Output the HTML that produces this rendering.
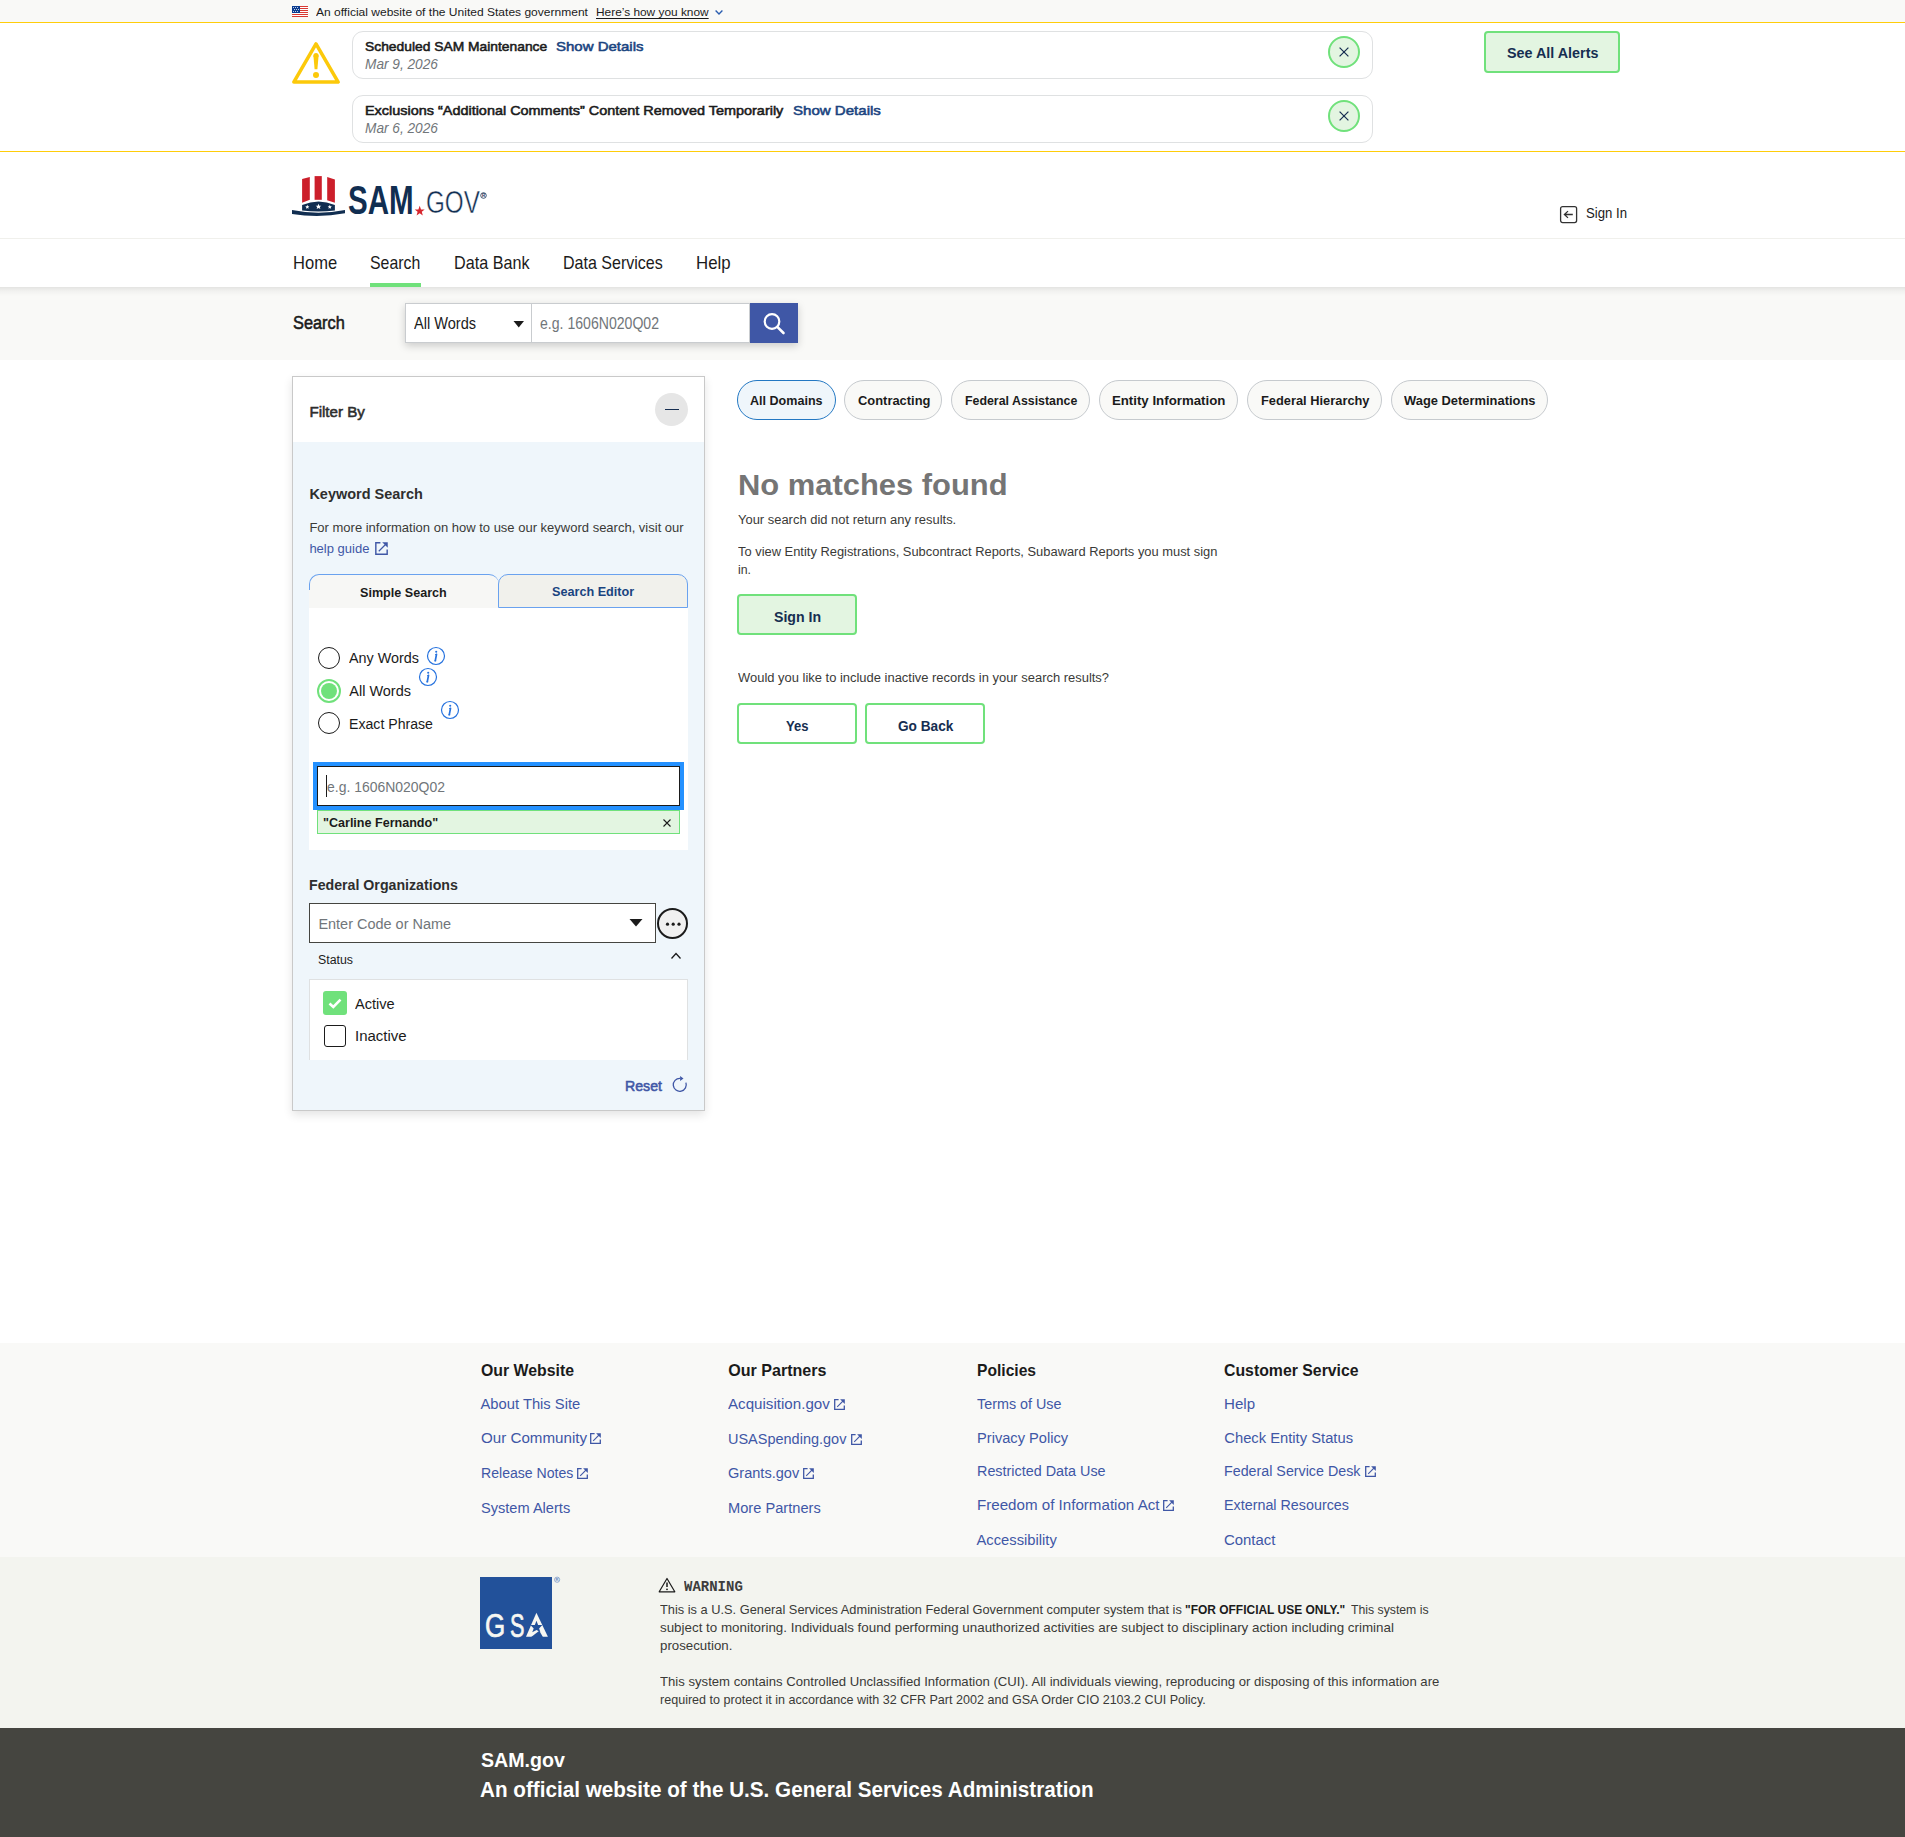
<!DOCTYPE html><html><head><meta charset='utf-8'><title>SAM.gov Search</title><style>
*{box-sizing:border-box;margin:0;padding:0}
html,body{width:1905px;height:1837px;overflow:hidden;background:#fff;font-family:"Liberation Sans",sans-serif;}
.t{position:absolute;white-space:nowrap;transform-origin:0 0;}
.r{position:absolute;}
svg{position:absolute;overflow:visible}
</style></head><body>
<div class="r" style="left:0px;top:0px;width:1905px;height:22px;background:#f9f9f7"></div>
<div class="r" style="left:0px;top:22px;width:1905px;height:1px;background:#ffcd0a"></div>
<div class="r" style="left:0px;top:151px;width:1905px;height:1px;background:#ffcd0a"></div>
<div class="r" style="left:0px;top:238px;width:1905px;height:1px;background:#f0f0ec"></div>
<div class="r" style="left:0px;top:287px;width:1905px;height:73px;background:#f9f9f7"></div>
<div class="r" style="left:0px;top:287px;width:1905px;height:9px;background:linear-gradient(rgba(0,0,0,0.085),rgba(0,0,0,0.03) 45%,rgba(0,0,0,0))"></div>
<div class="r" style="left:0px;top:1343px;width:1905px;height:214px;background:#f9f9f7"></div>
<div class="r" style="left:0px;top:1557px;width:1905px;height:171px;background:#f3f4ef"></div>
<div class="r" style="left:0px;top:1728px;width:1905px;height:109px;background:#454540"></div>
<svg style="left:292px;top:6px" width="16" height="11" viewBox="0 0 16 11">
<rect width="16" height="11" fill="#fff"/>
<g fill="#d83933"><rect y="0" width="16" height="1"/><rect y="2" width="16" height="1"/><rect y="4" width="16" height="1"/><rect y="6" width="16" height="1"/><rect y="8" width="16" height="1"/><rect y="10" width="16" height="1"/></g>
<rect width="8" height="7" fill="#0b3d91"/>
<g fill="#fff"><circle cx="1.5" cy="1.5" r=".5"/><circle cx="3.5" cy="1.5" r=".5"/><circle cx="5.5" cy="1.5" r=".5"/><circle cx="2.5" cy="3.5" r=".5"/><circle cx="4.5" cy="3.5" r=".5"/><circle cx="6.5" cy="3.5" r=".5"/><circle cx="1.5" cy="5.5" r=".5"/><circle cx="3.5" cy="5.5" r=".5"/><circle cx="5.5" cy="5.5" r=".5"/></g>
</svg><span class="t" style="left:315.70px;top:7.01px;font-size:11.80px;line-height:11.80px;color:#1b1b1b;transform:scaleX(1.0198);">An official website of the United States government</span>
<span class="t" style="left:596.00px;top:7.01px;font-size:11.80px;line-height:11.80px;color:#1b1b1b;transform:scaleX(1.0065);text-decoration:underline;text-underline-offset:1.5px;">Here’s how you know</span>
<svg style="left:714px;top:8px" width="10" height="8" viewBox="0 0 10 8"><path d="M1.6 2.6 L5 5.9 L8.4 2.6" fill="none" stroke="#2a5db0" stroke-width="1.4"/></svg><svg style="left:292px;top:42px" width="48" height="42" viewBox="0 0 48 42">
<path d="M24 1.9 L46.2 40.1 L1.8 40.1 Z" fill="none" stroke="#fcc90a" stroke-width="3.5" stroke-linejoin="round"/>
<circle cx="24" cy="13.6" r="2.6" fill="#fcc90a"/>
<path d="M21.4 13.6 L26.6 13.6 L25.4 27.2 L22.6 27.2 Z" fill="#fcc90a"/>
<circle cx="24" cy="33" r="3" fill="#fcc90a"/>
</svg><div class="r" style="left:352px;top:31px;width:1021px;height:48px;border:1px solid #dfe1e2;border-radius:11px;background:#fff"></div>
<div class="r" style="left:1328px;top:36px;width:32px;height:32px;border:2px solid #70e17b;border-radius:50%;background:#e3f5e1"></div>
<svg style="left:1338px;top:46px" width="12" height="12" viewBox="0 0 12 12"><path d="M1.6 1.6 L10.4 10.4 M10.4 1.6 L1.6 10.4" stroke="#162e51" stroke-width="1.25"/></svg><div class="r" style="left:352px;top:95px;width:1021px;height:48px;border:1px solid #dfe1e2;border-radius:11px;background:#fff"></div>
<div class="r" style="left:1328px;top:100px;width:32px;height:32px;border:2px solid #70e17b;border-radius:50%;background:#e3f5e1"></div>
<svg style="left:1338px;top:110px" width="12" height="12" viewBox="0 0 12 12"><path d="M1.6 1.6 L10.4 10.4 M10.4 1.6 L1.6 10.4" stroke="#162e51" stroke-width="1.25"/></svg><span class="t" style="left:365.30px;top:39.85px;font-size:13.41px;line-height:13.41px;color:#1b1b1b;transform:scaleX(1.0314);-webkit-text-stroke:0.55px #1b1b1b;">Scheduled SAM Maintenance</span>
<span class="t" style="left:556.30px;top:39.85px;font-size:13.41px;line-height:13.41px;color:#1a4480;transform:scaleX(1.1184);-webkit-text-stroke:0.55px #1a4480;">Show Details</span>
<span class="t" style="left:365.30px;top:57.61px;font-size:13.81px;line-height:13.81px;color:#71767a;font-style:italic;transform:scaleX(0.9899);">Mar 9, 2026</span>
<span class="t" style="left:365.30px;top:103.85px;font-size:13.41px;line-height:13.41px;color:#1b1b1b;transform:scaleX(1.0762);-webkit-text-stroke:0.55px #1b1b1b;">Exclusions “Additional Comments” Content Removed Temporarily</span>
<span class="t" style="left:792.50px;top:103.85px;font-size:13.41px;line-height:13.41px;color:#1a4480;transform:scaleX(1.1235);-webkit-text-stroke:0.55px #1a4480;">Show Details</span>
<span class="t" style="left:365.30px;top:121.61px;font-size:13.81px;line-height:13.81px;color:#71767a;font-style:italic;transform:scaleX(0.9899);">Mar 6, 2026</span>
<div class="r" style="left:1484px;top:31px;width:136px;height:42px;border:2px solid #70e17b;border-radius:4px;background:#e3f5e1"></div>
<span class="t" style="left:1506.60px;top:46.42px;font-size:14.75px;line-height:14.75px;color:#162e51;font-weight:bold;transform:scaleX(0.9721);">See All Alerts</span>
<svg style="left:290px;top:172px" width="60" height="48" viewBox="0 0 60 48">
<g fill="#cc1f2b"><path d="M12.1 7.1 L19.8 4.9 L19.8 27.7 L12.1 30.7 Z"/><path d="M24.6 4.1 L31.8 4.1 L31.8 27.8 L24.6 27.8 Z"/><path d="M37.2 5 L44.9 7.4 L44.9 30.7 L37.2 28.3 Z"/></g>
<path d="M12.1 33.1 Q28.5 25.7 44.9 33.1 L44.9 38.6 Q28.5 40.4 12.1 38.6 Z" fill="#112e51"/>
<path d="M2 38.1 Q28.5 43.2 55 38.1 L55 41.3 Q28.5 46.2 2 41.9 Z" fill="#112e51"/>
<g fill="#fff">
<path d="M17.3 32.8 L17.9 34.2 L19.4 34.3 L18.3 35.2 L18.6 36.7 L17.3 35.9 L16 36.7 L16.3 35.2 L15.2 34.3 L16.7 34.2 Z"/>
<path d="M28.5 31.8 L29.3 33.7 L31.3 33.8 L29.8 35 L30.3 37 L28.5 35.9 L26.7 37 L27.2 35 L25.7 33.8 L27.7 33.7 Z"/>
<path d="M39.8 32.8 L40.4 34.2 L41.9 34.3 L40.8 35.2 L41.1 36.7 L39.8 35.9 L38.5 36.7 L38.8 35.2 L37.7 34.3 L39.2 34.2 Z"/>
</g></svg><span class="t" style="left:347.50px;top:179.74px;font-size:40.00px;line-height:40.00px;color:#112e51;font-weight:bold;transform:scaleX(0.7387);">SAM</span>
<svg style="left:414px;top:205px" width="12" height="11" viewBox="0 0 12 11"><path d="M5.7 0.8 L7 4.4 L10.7 4.5 L7.8 6.8 L8.8 10.4 L5.7 8.3 L2.6 10.4 L3.6 6.8 L0.7 4.5 L4.4 4.4 Z" fill="#d7262e"/></svg><span class="t" style="left:425.80px;top:187.05px;font-size:31.60px;line-height:31.60px;color:#112e51;transform:scaleX(0.7680);-webkit-text-stroke:0.5px #fff;">GOV</span>
<svg style="left:480px;top:192px" width="8" height="8" viewBox="0 0 8 8"><circle cx="3.5" cy="3.5" r="2.8" fill="none" stroke="#112e51" stroke-width="0.8"/><text x="3.5" y="5.1" font-size="4.5" font-family="Liberation Sans" font-weight="bold" text-anchor="middle" fill="#112e51">R</text></svg><svg style="left:1559px;top:205px" width="20" height="20" viewBox="0 0 20 20"><rect x="1.6" y="1.6" width="16" height="16" rx="2" fill="none" stroke="#333" stroke-width="1.3"/><path d="M13.8 9.5 L5.4 9.5 M9 6.1 L5.4 9.5 L9 12.9" fill="none" stroke="#333" stroke-width="1.3"/></svg><span class="t" style="left:1586.10px;top:206.48px;font-size:14.08px;line-height:14.08px;color:#1b1b1b;transform:scaleX(0.9349);">Sign In</span>
<span class="t" style="left:292.50px;top:254.62px;font-size:17.70px;line-height:17.70px;color:#1b1b1b;transform:scaleX(0.9354);">Home</span>
<span class="t" style="left:370.00px;top:254.62px;font-size:17.70px;line-height:17.70px;color:#1b1b1b;transform:scaleX(0.8966);">Search</span>
<span class="t" style="left:453.80px;top:254.62px;font-size:17.70px;line-height:17.70px;color:#1b1b1b;transform:scaleX(0.9137);">Data Bank</span>
<span class="t" style="left:562.90px;top:254.62px;font-size:17.70px;line-height:17.70px;color:#1b1b1b;transform:scaleX(0.9059);">Data Services</span>
<span class="t" style="left:695.50px;top:254.62px;font-size:17.70px;line-height:17.70px;color:#1b1b1b;transform:scaleX(0.9513);">Help</span>
<div class="r" style="left:370px;top:283px;width:51px;height:4px;background:#70e17b"></div>
<span class="t" style="left:292.50px;top:314.70px;font-size:17.83px;line-height:17.83px;color:#1b1b1b;transform:scaleX(0.9163);-webkit-text-stroke:0.55px #1b1b1b;">Search</span>
<div class="r" style="left:405px;top:303px;width:393px;height:40px;box-shadow:0 3px 8px rgba(0,0,0,0.18);background:#fff"></div>
<div class="r" style="left:405px;top:303px;width:127px;height:40px;border:1px solid #c9cccf;background:#fff"></div>
<span class="t" style="left:414.00px;top:316.29px;font-size:15.96px;line-height:15.96px;color:#1b1b1b;transform:scaleX(0.9122);">All Words</span>
<svg style="left:513px;top:320px" width="12" height="8" viewBox="0 0 12 8"><path d="M0.5 1 L11 1 L5.75 7.5 Z" fill="#1b1b1b"/></svg><div class="r" style="left:532px;top:303px;width:218px;height:40px;border:1px solid #c9cccf;border-left:none;background:#fff"></div>
<span class="t" style="left:540.20px;top:316.29px;font-size:15.96px;line-height:15.96px;color:#71767a;transform:scaleX(0.8826);">e.g. 1606N020Q02</span>
<div class="r" style="left:750px;top:303px;width:48px;height:40px;background:#3f57a6"></div>
<svg style="left:760px;top:310px" width="28" height="28" viewBox="0 0 28 28"><circle cx="12" cy="11.5" r="7.3" fill="none" stroke="#fff" stroke-width="2.2"/><path d="M17.3 16.8 L23.5 23" stroke="#fff" stroke-width="2.6" stroke-linecap="round"/></svg><div class="r" style="left:292px;top:376px;width:413px;height:735px;border:1px solid #c9c9c9;background:#eff6fb;box-shadow:0 4px 9px rgba(0,0,0,0.11)"></div>
<div class="r" style="left:293px;top:377px;width:411px;height:65px;background:#fff"></div>
<span class="t" style="left:309.40px;top:404.07px;font-size:15.15px;line-height:15.15px;color:#2e2e2e;-webkit-text-stroke:0.55px #2e2e2e;">Filter By</span>
<div class="r" style="left:655px;top:393px;width:33px;height:33px;border-radius:50%;background:#e6e6e6"></div>
<div class="r" style="left:665px;top:409px;width:14px;height:1.3000000000000114px;background:#162e51"></div>
<span class="t" style="left:309.40px;top:486.54px;font-size:14.48px;line-height:14.48px;color:#2e2e2e;font-weight:bold;">Keyword Search</span>
<span class="t" style="left:309.40px;top:520.99px;font-size:13.01px;line-height:13.01px;color:#3a3a37;">For more information on how to use our keyword search, visit our</span>
<span class="t" style="left:309.40px;top:542.39px;font-size:13.01px;line-height:13.01px;color:#3f57a6;">help guide</span>
<svg style="left:375px;top:542px" width="13" height="13" viewBox="0 0 11 11"><path d="M4.6 0.7 L0.7 0.7 L0.7 10.3 L10.3 10.3 L10.3 6.4" fill="none" stroke="#3f57a6" stroke-width="1.2"/><path d="M3.2 7.8 L8.9 2.1" stroke="#3f57a6" stroke-width="1"/><path d="M6.1 0.2 L10.8 0.2 L10.8 4.9 Z" fill="#3f57a6"/></svg><div class="r" style="left:309px;top:574px;width:190px;height:36px;background:#f7f7f5;border:1px solid #6aa2ef;border-bottom:none;border-right:none;border-radius:10px 10px 0 0"></div>
<div class="r" style="left:498px;top:574px;width:190px;height:34px;background:#f1f1ec;border:1px solid #6aa2ef;border-radius:10px 10px 0 0"></div>
<div class="r" style="left:309px;top:590px;width:1px;height:18px;background:#f7f7f5"></div>
<span class="t" style="left:360.20px;top:586.15px;font-size:13.41px;line-height:13.41px;color:#1b1b1b;font-weight:bold;transform:scaleX(0.9385);">Simple Search</span>
<span class="t" style="left:552.00px;top:584.95px;font-size:13.41px;line-height:13.41px;color:#1a4480;font-weight:bold;transform:scaleX(0.9432);">Search Editor</span>
<div class="r" style="left:309px;top:608px;width:379px;height:242px;background:#fff"></div>
<div class="r" style="left:318px;top:647px;width:22px;height:22px;border-radius:50%;border:1.6px solid #1b1b1b;background:#fff"></div>
<span class="t" style="left:349.30px;top:651.34px;font-size:14.48px;line-height:14.48px;color:#1b1b1b;transform:scaleX(0.9926);">Any Words</span>
<svg style="left:426px;top:646px" width="20" height="20" viewBox="0 0 20 20"><circle cx="10" cy="10" r="8.5" fill="none" stroke="#2672de" stroke-width="1.2"/><circle cx="10.2" cy="5.7" r="1.05" fill="#2672de"/><path d="M10.5 8.4 L9.3 14.6" stroke="#2672de" stroke-width="1.7" stroke-linecap="round"/><path d="M9.1 8.7 L10.6 8.4 M8.4 14.8 L10.2 14.8" stroke="#2672de" stroke-width="1"/></svg><div class="r" style="left:317px;top:678.7px;width:24px;height:24.0px;border-radius:50%;border:2px solid #70e17b;background:#fff"></div>
<div class="r" style="left:321px;top:682.7px;width:16px;height:16.0px;border-radius:50%;background:#70e17b"></div>
<span class="t" style="left:349.30px;top:684.04px;font-size:14.48px;line-height:14.48px;color:#1b1b1b;">All Words</span>
<svg style="left:418px;top:667px" width="20" height="20" viewBox="0 0 20 20"><circle cx="10" cy="10" r="8.5" fill="none" stroke="#2672de" stroke-width="1.2"/><circle cx="10.2" cy="5.7" r="1.05" fill="#2672de"/><path d="M10.5 8.4 L9.3 14.6" stroke="#2672de" stroke-width="1.7" stroke-linecap="round"/><path d="M9.1 8.7 L10.6 8.4 M8.4 14.8 L10.2 14.8" stroke="#2672de" stroke-width="1"/></svg><div class="r" style="left:318px;top:712.2px;width:22px;height:22.0px;border-radius:50%;border:1.6px solid #1b1b1b;background:#fff"></div>
<span class="t" style="left:349.30px;top:716.54px;font-size:14.48px;line-height:14.48px;color:#1b1b1b;transform:scaleX(0.9758);">Exact Phrase</span>
<svg style="left:440px;top:700px" width="20" height="20" viewBox="0 0 20 20"><circle cx="10" cy="10" r="8.5" fill="none" stroke="#2672de" stroke-width="1.2"/><circle cx="10.2" cy="5.7" r="1.05" fill="#2672de"/><path d="M10.5 8.4 L9.3 14.6" stroke="#2672de" stroke-width="1.7" stroke-linecap="round"/><path d="M9.1 8.7 L10.6 8.4 M8.4 14.8 L10.2 14.8" stroke="#2672de" stroke-width="1"/></svg><div class="r" style="left:313px;top:762px;width:371px;height:48px;background:#2491ff"></div>
<div class="r" style="left:317px;top:766px;width:363px;height:40px;background:#fff;border:1px solid #1b1b1b"></div>
<div class="r" style="left:326px;top:775px;width:1px;height:22px;background:#1b1b1b"></div>
<span class="t" style="left:327.00px;top:780.04px;font-size:14.48px;line-height:14.48px;color:#71767a;transform:scaleX(0.9644);">e.g. 1606N020Q02</span>
<div class="r" style="left:317px;top:810px;width:363px;height:24px;background:#e3f5e1;border:1px solid #70e17b"></div>
<span class="t" style="left:323.40px;top:815.95px;font-size:13.41px;line-height:13.41px;color:#1b1b1b;font-weight:bold;transform:scaleX(0.9362);">&quot;Carline Fernando&quot;</span>
<svg style="left:662px;top:818px" width="10" height="10" viewBox="0 0 10 10"><path d="M1.5 1.5 L8.5 8.5 M8.5 1.5 L1.5 8.5" stroke="#1b1b1b" stroke-width="1.1"/></svg><span class="t" style="left:309.40px;top:878.91px;font-size:13.81px;line-height:13.81px;color:#2e2e2e;font-weight:bold;transform:scaleX(1.0271);">Federal Organizations</span>
<div class="r" style="left:309px;top:903px;width:347px;height:40px;background:#fff;border:1px solid #454540"></div>
<span class="t" style="left:318.40px;top:917.14px;font-size:14.48px;line-height:14.48px;color:#71767a;">Enter Code or Name</span>
<svg style="left:628px;top:917px" width="16" height="11" viewBox="0 0 16 11"><path d="M1.5 2 L14.5 2 L8 9.6 Z" fill="#1b1b1b"/></svg><div class="r" style="left:657px;top:908px;width:31px;height:31px;border-radius:50%;border:2px solid #1b1b1b;background:#f0f0f0"></div>
<svg style="left:663px;top:920px" width="20" height="8" viewBox="0 0 20 8"><circle cx="4.5" cy="4.2" r="1.6" fill="#1b1b1b"/><circle cx="10.2" cy="4.2" r="1.6" fill="#1b1b1b"/><circle cx="16" cy="4.2" r="1.6" fill="#1b1b1b"/></svg><span class="t" style="left:317.70px;top:953.84px;font-size:12.47px;line-height:12.47px;color:#1b1b1b;transform:scaleX(0.9901);">Status</span>
<svg style="left:669px;top:950px" width="14" height="10" viewBox="0 0 14 10"><path d="M2.5 8.5 L7 3.5 L11.5 8.5" fill="none" stroke="#1b1b1b" stroke-width="1.3"/></svg><div class="r" style="left:309px;top:979px;width:379px;height:81px;background:#fff;border:1px solid #dfe1e2;border-bottom:none"></div>
<div class="r" style="left:323px;top:991px;width:24px;height:24px;background:#70e17b;border-radius:3px"></div>
<svg style="left:323px;top:991px" width="24" height="24" viewBox="0 0 24 24"><path d="M6.5 12.5 L10.3 16 L17.5 8.6" fill="none" stroke="#fff" stroke-width="2.6"/></svg><span class="t" style="left:355.40px;top:997.34px;font-size:14.48px;line-height:14.48px;color:#1b1b1b;transform:scaleX(1.0086);">Active</span>
<div class="r" style="left:324px;top:1025px;width:22px;height:22px;background:#fff;border:1.5px solid #1b1b1b;border-radius:3px"></div>
<span class="t" style="left:355.40px;top:1028.94px;font-size:14.48px;line-height:14.48px;color:#1b1b1b;transform:scaleX(1.0364);">Inactive</span>
<span class="t" style="left:625.40px;top:1079.04px;font-size:14.48px;line-height:14.48px;color:#3f57a6;transform:scaleX(0.9790);-webkit-text-stroke:0.55px #3f57a6;">Reset</span>
<svg style="left:671px;top:1075px" width="17" height="17" viewBox="0 0 17 17"><path d="M9 3.3 A6.5 6.5 0 1 0 14.9 7.6" fill="none" stroke="#3f57a6" stroke-width="1.3"/><path d="M9.1 0.9 L12.5 3.5 L9.1 6.1 Z" fill="#3f57a6"/></svg><div class="r" style="left:737px;top:380px;width:99px;height:40px;border:1px solid #2378c3;border-radius:20px;background:#eff6fb"></div>
<span class="t" style="left:750.40px;top:394.16px;font-size:13.27px;line-height:13.27px;color:#1b1b1b;font-weight:bold;transform:scaleX(0.9463);">All Domains</span>
<div class="r" style="left:844px;top:380px;width:98px;height:40px;border:1px solid #c6cace;border-radius:20px;background:#f9f9f7"></div>
<span class="t" style="left:857.50px;top:394.16px;font-size:13.27px;line-height:13.27px;color:#1b1b1b;font-weight:bold;transform:scaleX(0.9736);">Contracting</span>
<div class="r" style="left:951px;top:380px;width:139px;height:40px;border:1px solid #c6cace;border-radius:20px;background:#f9f9f7"></div>
<span class="t" style="left:964.60px;top:394.16px;font-size:13.27px;line-height:13.27px;color:#1b1b1b;font-weight:bold;transform:scaleX(0.9326);">Federal Assistance</span>
<div class="r" style="left:1099px;top:380px;width:139px;height:40px;border:1px solid #c6cace;border-radius:20px;background:#f9f9f7"></div>
<span class="t" style="left:1111.90px;top:394.16px;font-size:13.27px;line-height:13.27px;color:#1b1b1b;font-weight:bold;">Entity Information</span>
<div class="r" style="left:1247px;top:380px;width:135px;height:40px;border:1px solid #c6cace;border-radius:20px;background:#f9f9f7"></div>
<span class="t" style="left:1260.70px;top:394.16px;font-size:13.27px;line-height:13.27px;color:#1b1b1b;font-weight:bold;transform:scaleX(0.9682);">Federal Hierarchy</span>
<div class="r" style="left:1391px;top:380px;width:157px;height:40px;border:1px solid #c6cace;border-radius:20px;background:#f9f9f7"></div>
<span class="t" style="left:1403.80px;top:394.16px;font-size:13.27px;line-height:13.27px;color:#1b1b1b;font-weight:bold;transform:scaleX(0.9727);">Wage Determinations</span>
<span class="t" style="left:737.90px;top:470.13px;font-size:29.50px;line-height:29.50px;color:#757575;font-weight:bold;transform:scaleX(1.0475);">No matches found</span>
<span class="t" style="left:737.60px;top:514.04px;font-size:12.47px;line-height:12.47px;color:#3a3a37;transform:scaleX(1.0379);">Your search did not return any results.</span>
<span class="t" style="left:737.60px;top:546.04px;font-size:12.47px;line-height:12.47px;color:#3a3a37;transform:scaleX(1.0341);">To view Entity Registrations, Subcontract Reports, Subaward Reports you must sign</span>
<span class="t" style="left:737.60px;top:563.54px;font-size:12.47px;line-height:12.47px;color:#3a3a37;transform:scaleX(0.9882);">in.</span>
<div class="r" style="left:737px;top:594px;width:120px;height:41px;border:2px solid #70e17b;border-radius:4px;background:#e3f5e1"></div>
<span class="t" style="left:773.70px;top:610.18px;font-size:14.08px;line-height:14.08px;color:#162e51;font-weight:bold;transform:scaleX(1.0053);">Sign In</span>
<span class="t" style="left:737.60px;top:671.74px;font-size:12.47px;line-height:12.47px;color:#3a3a37;transform:scaleX(1.0382);">Would you like to include inactive records in your search results?</span>
<div class="r" style="left:737px;top:703px;width:120px;height:41px;border:2px solid #70e17b;border-radius:4px;background:#fff"></div>
<span class="t" style="left:786.00px;top:719.18px;font-size:14.08px;line-height:14.08px;color:#162e51;font-weight:bold;transform:scaleX(0.9265);">Yes</span>
<div class="r" style="left:865px;top:703px;width:120px;height:41px;border:2px solid #70e17b;border-radius:4px;background:#fff"></div>
<span class="t" style="left:897.70px;top:719.18px;font-size:14.08px;line-height:14.08px;color:#162e51;font-weight:bold;transform:scaleX(0.9693);">Go Back</span>
<span class="t" style="left:480.50px;top:1361.88px;font-size:16.09px;line-height:16.09px;color:#1b1b1b;font-weight:bold;transform:scaleX(0.9858);">Our Website</span>
<span class="t" style="left:728.20px;top:1361.88px;font-size:16.09px;line-height:16.09px;color:#1b1b1b;font-weight:bold;">Our Partners</span>
<span class="t" style="left:976.50px;top:1361.88px;font-size:16.09px;line-height:16.09px;color:#1b1b1b;font-weight:bold;transform:scaleX(0.9718);">Policies</span>
<span class="t" style="left:1224.30px;top:1361.88px;font-size:16.09px;line-height:16.09px;color:#1b1b1b;font-weight:bold;transform:scaleX(0.9844);">Customer Service</span>
<span class="t" style="left:480.50px;top:1396.92px;font-size:14.75px;line-height:14.75px;color:#3f57a6;">About This Site</span>
<span class="t" style="left:480.50px;top:1431.02px;font-size:14.75px;line-height:14.75px;color:#3f57a6;transform:scaleX(1.0267);">Our Community</span>
<svg style="left:590px;top:1433px" width="11" height="11" viewBox="0 0 11 11"><path d="M4.6 0.7 L0.7 0.7 L0.7 10.3 L10.3 10.3 L10.3 6.4" fill="none" stroke="#3f57a6" stroke-width="1.3"/><path d="M3.2 7.8 L8.9 2.1" stroke="#3f57a6" stroke-width="1.1"/><path d="M6.1 0.2 L10.8 0.2 L10.8 4.9 Z" fill="#3f57a6"/></svg><span class="t" style="left:480.50px;top:1465.62px;font-size:14.75px;line-height:14.75px;color:#3f57a6;transform:scaleX(0.9550);">Release Notes</span>
<svg style="left:577px;top:1468px" width="11" height="11" viewBox="0 0 11 11"><path d="M4.6 0.7 L0.7 0.7 L0.7 10.3 L10.3 10.3 L10.3 6.4" fill="none" stroke="#3f57a6" stroke-width="1.3"/><path d="M3.2 7.8 L8.9 2.1" stroke="#3f57a6" stroke-width="1.1"/><path d="M6.1 0.2 L10.8 0.2 L10.8 4.9 Z" fill="#3f57a6"/></svg><span class="t" style="left:480.50px;top:1500.52px;font-size:14.75px;line-height:14.75px;color:#3f57a6;transform:scaleX(0.9890);">System Alerts</span>
<span class="t" style="left:728.20px;top:1396.92px;font-size:14.75px;line-height:14.75px;color:#3f57a6;transform:scaleX(1.0264);">Acquisition.gov</span>
<svg style="left:834px;top:1399px" width="11" height="11" viewBox="0 0 11 11"><path d="M4.6 0.7 L0.7 0.7 L0.7 10.3 L10.3 10.3 L10.3 6.4" fill="none" stroke="#3f57a6" stroke-width="1.3"/><path d="M3.2 7.8 L8.9 2.1" stroke="#3f57a6" stroke-width="1.1"/><path d="M6.1 0.2 L10.8 0.2 L10.8 4.9 Z" fill="#3f57a6"/></svg><span class="t" style="left:728.20px;top:1432.32px;font-size:14.75px;line-height:14.75px;color:#3f57a6;transform:scaleX(0.9820);">USASpending.gov</span>
<svg style="left:851px;top:1434px" width="11" height="11" viewBox="0 0 11 11"><path d="M4.6 0.7 L0.7 0.7 L0.7 10.3 L10.3 10.3 L10.3 6.4" fill="none" stroke="#3f57a6" stroke-width="1.3"/><path d="M3.2 7.8 L8.9 2.1" stroke="#3f57a6" stroke-width="1.1"/><path d="M6.1 0.2 L10.8 0.2 L10.8 4.9 Z" fill="#3f57a6"/></svg><span class="t" style="left:728.20px;top:1466.42px;font-size:14.75px;line-height:14.75px;color:#3f57a6;transform:scaleX(0.9872);">Grants.gov</span>
<svg style="left:803px;top:1468px" width="11" height="11" viewBox="0 0 11 11"><path d="M4.6 0.7 L0.7 0.7 L0.7 10.3 L10.3 10.3 L10.3 6.4" fill="none" stroke="#3f57a6" stroke-width="1.3"/><path d="M3.2 7.8 L8.9 2.1" stroke="#3f57a6" stroke-width="1.1"/><path d="M6.1 0.2 L10.8 0.2 L10.8 4.9 Z" fill="#3f57a6"/></svg><span class="t" style="left:728.20px;top:1501.32px;font-size:14.75px;line-height:14.75px;color:#3f57a6;transform:scaleX(0.9922);">More Partners</span>
<span class="t" style="left:976.50px;top:1396.92px;font-size:14.75px;line-height:14.75px;color:#3f57a6;transform:scaleX(0.9727);">Terms of Use</span>
<span class="t" style="left:976.50px;top:1431.02px;font-size:14.75px;line-height:14.75px;color:#3f57a6;transform:scaleX(0.9923);">Privacy Policy</span>
<span class="t" style="left:976.50px;top:1463.82px;font-size:14.75px;line-height:14.75px;color:#3f57a6;transform:scaleX(0.9742);">Restricted Data Use</span>
<span class="t" style="left:976.50px;top:1497.92px;font-size:14.75px;line-height:14.75px;color:#3f57a6;transform:scaleX(1.0260);">Freedom of Information Act</span>
<svg style="left:1163px;top:1500px" width="11" height="11" viewBox="0 0 11 11"><path d="M4.6 0.7 L0.7 0.7 L0.7 10.3 L10.3 10.3 L10.3 6.4" fill="none" stroke="#3f57a6" stroke-width="1.3"/><path d="M3.2 7.8 L8.9 2.1" stroke="#3f57a6" stroke-width="1.1"/><path d="M6.1 0.2 L10.8 0.2 L10.8 4.9 Z" fill="#3f57a6"/></svg><span class="t" style="left:976.50px;top:1532.82px;font-size:14.75px;line-height:14.75px;color:#3f57a6;">Accessibility</span>
<span class="t" style="left:1224.30px;top:1396.92px;font-size:14.75px;line-height:14.75px;color:#3f57a6;transform:scaleX(1.0228);">Help</span>
<span class="t" style="left:1224.30px;top:1431.02px;font-size:14.75px;line-height:14.75px;color:#3f57a6;">Check Entity Status</span>
<span class="t" style="left:1224.30px;top:1463.82px;font-size:14.75px;line-height:14.75px;color:#3f57a6;transform:scaleX(0.9676);">Federal Service Desk</span>
<svg style="left:1365px;top:1466px" width="11" height="11" viewBox="0 0 11 11"><path d="M4.6 0.7 L0.7 0.7 L0.7 10.3 L10.3 10.3 L10.3 6.4" fill="none" stroke="#3f57a6" stroke-width="1.3"/><path d="M3.2 7.8 L8.9 2.1" stroke="#3f57a6" stroke-width="1.1"/><path d="M6.1 0.2 L10.8 0.2 L10.8 4.9 Z" fill="#3f57a6"/></svg><span class="t" style="left:1224.30px;top:1497.92px;font-size:14.75px;line-height:14.75px;color:#3f57a6;transform:scaleX(0.9706);">External Resources</span>
<span class="t" style="left:1224.30px;top:1532.82px;font-size:14.75px;line-height:14.75px;color:#3f57a6;transform:scaleX(1.0116);">Contact</span>
<svg style="left:478px;top:1574px" width="84" height="78" viewBox="0 0 84 78"><rect x="2" y="3" width="72" height="72" fill="#22519a"/><circle cx="79.1" cy="5.7" r="2.6" fill="none" stroke="#6b8cc4" stroke-width="0.7"/><text x="79.1" y="7.3" font-size="4.2" font-family="Liberation Sans" font-weight="bold" text-anchor="middle" fill="#6b8cc4">R</text><path d="M58.4 38.8 L69.9 62.8 L48 62.8 Z" fill="#f7f7f2"/><path d="M58.5 46.8 L60.1 51.1 L64.3 51.1 L61.1 54.5 L62.4 58.3 L58.6 56 L54.2 58.3 L55.7 54.5 L52.4 51.1 L56.8 51.1 Z" fill="#22519a"/><path d="M61.3 56.8 L64.9 62.9 L53.2 62.9 Z" fill="#22519a"/><path d="M60.2 52 L63.8 52 L65.4 55.5 L62.2 57.5 Z M56.5 52 L53 52 L51.3 55.8 L54.6 57.3 Z" fill="#22519a" opacity="0"/></svg><span class="t" style="left:484.80px;top:1610.09px;font-size:32.85px;line-height:32.85px;color:#f7f7f2;transform:scaleX(0.7923);-webkit-text-stroke:0.7px #f7f7f2;">G</span>
<span class="t" style="left:509.70px;top:1610.09px;font-size:32.85px;line-height:32.85px;color:#f7f7f2;transform:scaleX(0.6592);-webkit-text-stroke:0.7px #f7f7f2;">S</span>
<svg style="left:658px;top:1577px" width="18" height="16" viewBox="0 0 18 16"><path d="M9 1.5 L16.8 14.8 L1.2 14.8 Z" fill="none" stroke="#1b1b1b" stroke-width="1.2" stroke-linejoin="round"/><path d="M9 5.5 L9 10" stroke="#1b1b1b" stroke-width="1.5"/><circle cx="9" cy="12.3" r="0.9" fill="#1b1b1b"/></svg><span class="t" style="left:683.60px;top:1580.30px;font-size:14.75px;line-height:14.75px;color:#3d3d3d;font-weight:bold;font-family:'Liberation Mono', monospace;transform:scaleX(0.9492);">WARNING</span>
<span class="t" style="left:659.50px;top:1603.92px;font-size:12.74px;line-height:12.74px;color:#3a3a37;transform:scaleX(1.0059);">This is a U.S. General Services Administration Federal Government computer system that is</span>
<span class="t" style="left:1185.00px;top:1603.92px;font-size:12.74px;line-height:12.74px;color:#1b1b1b;font-weight:bold;transform:scaleX(0.9395);">&quot;FOR OFFICIAL USE ONLY.&quot;</span>
<span class="t" style="left:1350.80px;top:1603.92px;font-size:12.74px;line-height:12.74px;color:#3a3a37;transform:scaleX(0.9617);">This system is</span>
<span class="t" style="left:659.50px;top:1621.72px;font-size:12.74px;line-height:12.74px;color:#3a3a37;transform:scaleX(1.0494);">subject to monitoring. Individuals found performing unauthorized activities are subject to disciplinary action including criminal</span>
<span class="t" style="left:659.50px;top:1639.62px;font-size:12.74px;line-height:12.74px;color:#3a3a37;transform:scaleX(1.0429);">prosecution.</span>
<span class="t" style="left:659.50px;top:1675.72px;font-size:12.74px;line-height:12.74px;color:#3a3a37;transform:scaleX(1.0310);">This system contains Controlled Unclassified Information (CUI). All individuals viewing, reproducing or disposing of this information are</span>
<span class="t" style="left:659.50px;top:1693.82px;font-size:12.74px;line-height:12.74px;color:#3a3a37;transform:scaleX(0.9864);">required to protect it in accordance with 32 CFR Part 2002 and GSA Order CIO 2103.2 CUI Policy.</span>
<span class="t" style="left:480.80px;top:1750.02px;font-size:20.65px;line-height:20.65px;color:#fff;font-weight:bold;transform:scaleX(0.9505);">SAM.gov</span>
<span class="t" style="left:480.00px;top:1780.14px;font-size:21.45px;line-height:21.45px;color:#fff;font-weight:bold;transform:scaleX(0.9640);">An official website of the U.S. General Services Administration</span>
</body></html>
